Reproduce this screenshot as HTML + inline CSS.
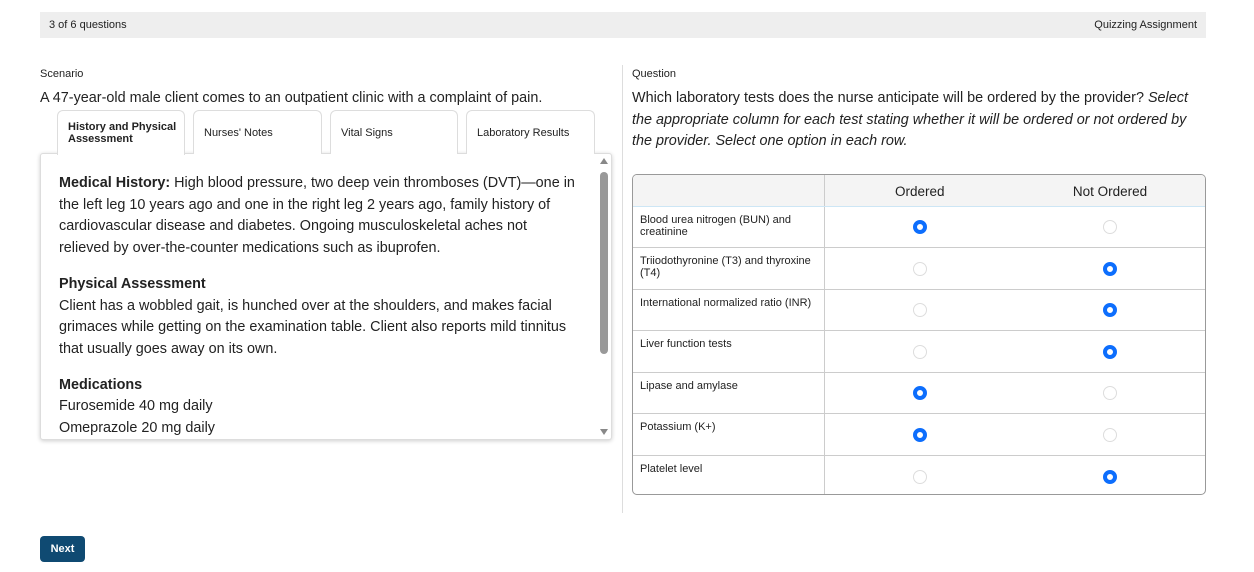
<!DOCTYPE html>
<html><head><meta charset="utf-8"><style>
*{box-sizing:border-box;margin:0;padding:0}
body{width:1254px;height:572px;background:#fff;font-family:"Liberation Sans",Arial,sans-serif;color:#222;position:relative;overflow:hidden}
.abs{position:absolute}
.top{left:40px;top:12px;width:1166px;height:26px;background:#eeeeee;font-size:11px;line-height:26px;padding:0 9px;display:flex;justify-content:space-between}
.lbl{font-size:11px}
.tab{position:absolute;top:110px;height:44px;border:1px solid #ddd;border-bottom:none;border-radius:6px 6px 0 0;background:#fff;font-size:11px;padding:0 10px;display:flex;align-items:center;white-space:nowrap}
.panel{left:40px;top:153px;width:572px;height:287px;border:1px solid #ddd;box-shadow:0 1px 4px rgba(0,0,0,.2);border-radius:3px;background:#fff;overflow:hidden}
.panel .c{padding:19px 0 0 18px;font-size:14.4px;line-height:21.7px;width:540px}
.panel p{margin-bottom:14px}
.tw{position:absolute;left:632px;top:174px;width:574px;height:321px;border:1px solid #999;border-radius:5px;overflow:hidden}
table{border-collapse:collapse;width:100%;table-layout:fixed;font-size:11px}
td,th{border-top:1px solid #ccc;height:41.5px}
th{height:31px;background:#f4f4f4;font-weight:normal;font-size:13.5px;border-top:none;border-bottom:1px solid #cde6f5;padding-top:2px}
td:first-child,th:first-child{border-right:1px solid #ccc;padding:0 7px;vertical-align:top;padding-top:7px;line-height:12px}
td{text-align:center}
td:first-child{text-align:left}
tr:first-child td{border-top:none}
.r{display:inline-block;width:14px;height:14px;border-radius:50%;border:1px solid #ddd;vertical-align:middle;margin-top:1px}
.r.on{border:4px solid #0d6efd;background:#fff}
</style></head><body>
<div class="abs top"><span>3 of 6 questions</span><span>Quizzing Assignment</span></div>
<div class="abs lbl" style="left:40px;top:68px">Scenario</div>
<div class="abs lbl" style="left:632px;top:68px">Question</div>
<div class="abs" style="left:622px;top:65px;width:1px;height:448px;background:#ddd"></div>
<div class="abs" style="left:40px;top:90px;font-size:14.4px">A 47-year-old male client comes to an outpatient clinic with a complaint of pain.</div>
<div class="abs" style="left:632px;top:88px;width:565px;font-size:14.4px;line-height:21.5px">Which laboratory tests does the nurse anticipate will be ordered by the provider? <i>Select the appropriate column for each test stating whether it will be ordered or not ordered by the provider. Select one option in each row.</i></div>
<div class="abs panel"><div class="c">
<p><b>Medical History:</b> High blood pressure, two deep vein thromboses (DVT)—one in the left leg 10 years ago and one in the right leg 2 years ago, family history of cardiovascular disease and diabetes. Ongoing musculoskeletal aches not relieved by over-the-counter medications such as ibuprofen.</p>
<p><b>Physical Assessment</b><br>Client has a wobbled gait, is hunched over at the shoulders, and makes facial grimaces while getting on the examination table. Client also reports mild tinnitus that usually goes away on its own.</p>
<p><b>Medications</b><br>Furosemide 40 mg daily<br>Omeprazole 20 mg daily</p>
</div>
<div class="abs" style="right:3px;top:18px;width:8px;height:182px;background:#999;border-radius:4px"></div>
<div class="abs" style="right:3px;top:4px;width:0;height:0;border-left:4px solid transparent;border-right:4px solid transparent;border-bottom:6px solid #888"></div>
<div class="abs" style="right:3px;bottom:4px;width:0;height:0;border-left:4px solid transparent;border-right:4px solid transparent;border-top:6px solid #888"></div>
</div>
<div class="tab" style="left:57px;width:128px;height:45px;z-index:2;font-weight:bold;line-height:12px">History and Physical<br>Assessment</div>
<div class="tab" style="left:193px;width:129px">Nurses' Notes</div>
<div class="tab" style="left:330px;width:128px">Vital Signs</div>
<div class="tab" style="left:466px;width:129px">Laboratory Results</div>
<div class="tw">
<table>
<colgroup><col style="width:191px"><col style="width:191px"><col></colgroup>
<tr><th></th><th>Ordered</th><th>Not Ordered</th></tr>
<tr><td>Blood urea nitrogen (BUN) and creatinine</td><td><span class="r on"></span></td><td><span class="r"></span></td></tr>
<tr><td>Triiodothyronine (T3) and thyroxine (T4)</td><td><span class="r"></span></td><td><span class="r on"></span></td></tr>
<tr><td>International normalized ratio (INR)</td><td><span class="r"></span></td><td><span class="r on"></span></td></tr>
<tr><td>Liver function tests</td><td><span class="r"></span></td><td><span class="r on"></span></td></tr>
<tr><td>Lipase and amylase</td><td><span class="r on"></span></td><td><span class="r"></span></td></tr>
<tr><td>Potassium (K+)</td><td><span class="r on"></span></td><td><span class="r"></span></td></tr>
<tr><td>Platelet level</td><td><span class="r"></span></td><td><span class="r on"></span></td></tr>
</table></div>
<div class="abs" style="left:40px;top:536px;width:45px;height:26px;background:#0f4a72;border-radius:4px;color:#fff;font-size:11px;font-weight:bold;text-align:center;line-height:26px">Next</div>
</body></html>
